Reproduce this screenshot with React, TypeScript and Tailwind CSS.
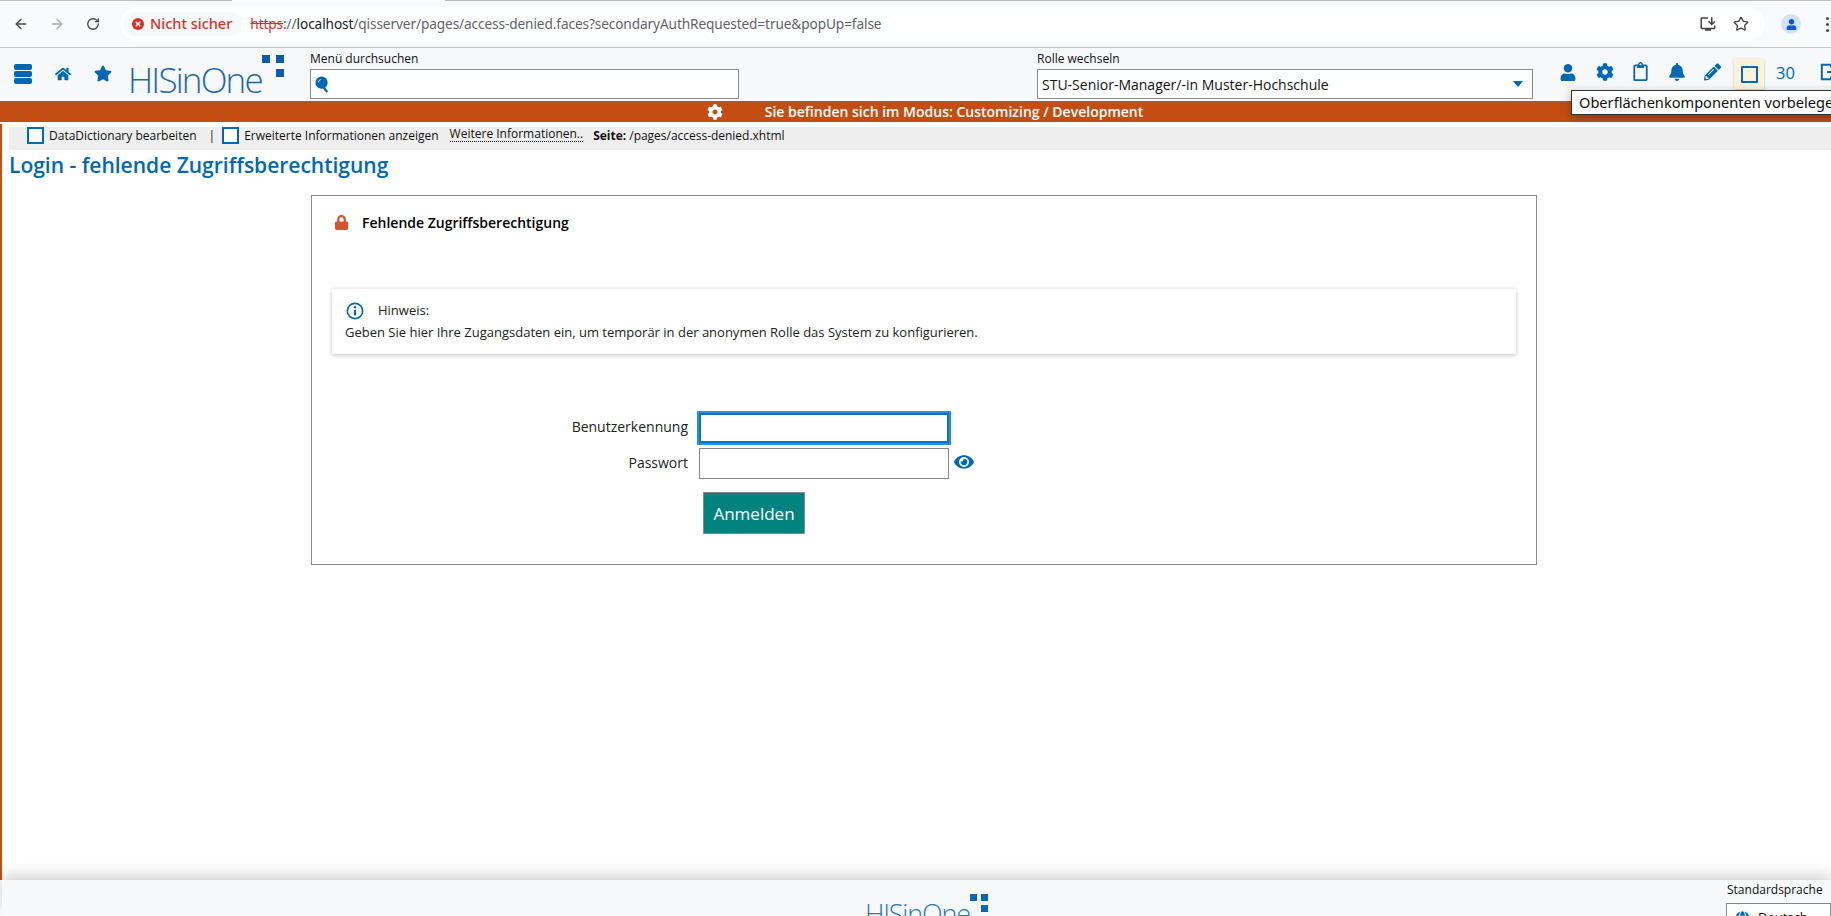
import React from "react";
import { ArrowLeft, ArrowRight, RotateCw, Star } from "lucide-react";
import { FaBell, FaCog, FaEye, FaGlobe, FaHome, FaLock, FaPencilAlt, FaRegClipboard, FaStar, FaUser } from "react-icons/fa";
import { MdOutlineInstallDesktop } from "react-icons/md";

function Logo() {
  return (
    <div className="flex items-start text-[#1f66ad]">
      <span className="font-light text-[35px] leading-[35px] tracking-[-1.8px]">HISinOne</span>
      <div className="-mt-[7px] grid grid-cols-2 gap-x-[6px] gap-y-[6px] w-[22px] shrink-0">
        <span className="w-[8px] h-[8px] bg-[#0f5cab]" />
        <span className="w-[8px] h-[8px] bg-[#0f5cab]" />
        <span className="w-[8px] h-[8px]" />
        <span className="w-[8px] h-[8px] bg-[#0f5cab]" />
      </div>
    </div>
  );
}

function FooterLogo() {
  return (
    <div className="flex items-start text-[#2a78bb]">
      <span className="font-light text-[27px] leading-[27px] tracking-[-1.2px]">HISinOne</span>
      <div className="-mt-[6px] grid grid-cols-2 gap-x-[4px] gap-y-[4px] w-[18px] shrink-0">
        <span className="w-[7px] h-[7px] bg-[#0068b4]" />
        <span className="w-[7px] h-[7px] bg-[#0068b4]" />
        <span className="w-[7px] h-[7px]" />
        <span className="w-[7px] h-[7px] bg-[#0068b4]" />
      </div>
    </div>
  );
}

function BrowserBar() {
  return (
    <div className="h-[48px] shrink-0 bg-[#f9fafb] border-b border-[#c4c4c4] flex flex-col font-['Noto_Sans',sans-serif] text-[#5f6368]">
      <div className="h-[1px] flex shrink-0">
        <span className="w-[232px] bg-[#bdbdbd]" />
        <span className="w-[213px] bg-white" />
        <span className="flex-1 bg-[#bdbdbd]" />
      </div>
      <div className="flex-1 flex items-center">
        <ArrowLeft className="w-[16px] h-[16px] ml-[13px] text-[#444]" strokeWidth={2} />
        <ArrowRight className="w-[16px] h-[16px] ml-[20px] text-[#aaa]" strokeWidth={2} />
        <RotateCw className="w-[14px] h-[14px] ml-[21px] text-[#444]" strokeWidth={2.2} />
        <div className="ml-[20px] w-[1645px] h-[34px] rounded-full bg-white flex items-center pl-[4px]">
          <div className="h-[24px] flex items-center rounded-full bg-[#f8f9fa] pl-[8px] pr-[10px] text-[#d93025] text-[14.5px] font-medium">
            <svg viewBox="0 0 16 16" className="w-[12px] h-[12px] mr-[6px]">
              <circle cx="8" cy="8" r="8" fill="#d93025" />
              <path d="M5 5l6 6M11 5l-6 6" stroke="#fff" strokeWidth="2" />
            </svg>
            Nicht sicher
          </div>
          <div className="ml-[8px] text-[13.65px] tracking-[-0.1px] whitespace-nowrap">
            <span className="text-[#d93025] line-through">https</span>
            <span>://</span>
            <span className="text-[#202124]">localhost</span>
            <span>/qisserver/pages/access-denied.faces?secondaryAuthRequested=true&amp;popUp=false</span>
          </div>
          <MdOutlineInstallDesktop className="w-[18px] h-[18px] ml-auto mr-[16px] text-[#444]" />
          <Star className="w-[16px] h-[16px] mr-[16px] text-[#444]" strokeWidth={2} />
        </div>
        <div className="ml-[16px] w-[20px] h-[20px] rounded-full bg-[#d3e3fd] flex items-center justify-center">
          <FaUser className="w-[11px] h-[11px] text-[#0b57d0]" />
        </div>
        <div className="ml-[25px] flex flex-col gap-[3px]">
          <span className="w-[3px] h-[3px] rounded-full bg-[#444]" />
          <span className="w-[3px] h-[3px] rounded-full bg-[#444]" />
          <span className="w-[3px] h-[3px] rounded-full bg-[#444]" />
        </div>
      </div>
    </div>
  );
}

function AppHeader() {
  return (
    <div className="h-[53px] shrink-0 bg-[#f7f8fa] flex relative text-[#111]">
      <div className="w-[310px] shrink-0 flex items-start">
        <div className="ml-[14px] mt-[16px] flex flex-col gap-[1px]">
          <span className="w-[18px] h-[6px] rounded-[2px] bg-[#0068b4]" />
          <span className="w-[18px] h-[6px] rounded-[2px] bg-[#0068b4]" />
          <span className="w-[18px] h-[6px] rounded-[2px] bg-[#0068b4]" />
        </div>
        <FaHome className="ml-[23px] mt-[18px] w-[16px] h-[16px] text-[#0068b4]" />
        <FaStar className="ml-[23px] mt-[17px] w-[18px] h-[17px] text-[#0068b4]" />
        <div className="ml-[16px] mt-[14px]">
          <Logo />
        </div>
      </div>
      <div className="w-[429px] shrink-0 flex flex-col">
        <label className="text-[12px] leading-[16px] mt-[3px]">Menü durchsuchen</label>
        <div className="mt-[2px] h-[30px] border border-[#8a8a8a] bg-white flex items-center pl-[4px]">
          <svg viewBox="0 0 16 18" className="w-[15px] h-[17px]">
            <circle cx="7" cy="7" r="6.5" fill="#0068b4" />
            <path d="M9 12l4 5" stroke="#0068b4" strokeWidth="2.4" />
            <path d="M3.5 7a3.5 3.5 0 0 1 3-3.4" stroke="#cfe3f3" strokeWidth="1" fill="none" />
          </svg>
        </div>
      </div>
      <div className="ml-[298px] w-[496px] shrink-0 flex flex-col">
        <label className="text-[12px] leading-[16px] mt-[3px]">Rolle wechseln</label>
        <div className="mt-[2px] h-[30px] border border-[#8a8a8a] bg-white flex items-center pl-[4px] pr-[9px] text-[14px]">
          <span>STU-Senior-Manager/-in Muster-Hochschule</span>
          <svg viewBox="0 0 10 6" className="ml-auto w-[10px] h-[6px]">
            <path d="M0 0h10L5 6z" fill="#0068b4" />
          </svg>
        </div>
      </div>
      <div className="flex items-start text-[#0068b4] ml-[26px]">
        <FaUser className="mt-[16px] w-[18px] h-[17px] shrink-0" />
        <FaCog className="ml-[19px] mt-[15px] w-[18px] h-[18px] shrink-0" />
        <FaRegClipboard className="ml-[19px] mt-[14px] w-[15px] h-[19px] shrink-0" />
        <FaBell className="ml-[21px] mt-[15px] w-[16px] h-[18px] shrink-0" />
        <FaPencilAlt className="ml-[19px] mt-[15px] w-[17px] h-[18px] shrink-0" />
        <div className="ml-[13px] mt-[11px] w-[30px] h-[30px] bg-[#fdf2d8] shadow-[0_1px_3px_rgba(0,0,0,0.2)] flex items-center justify-center shrink-0">
          <span className="w-[17px] h-[17px] border-2 border-[#0068b4] rounded-[1px]" />
        </div>
        <span className="ml-[12px] mt-[14px] text-[16.5px] leading-[22px] font-medium">30</span>
        <svg viewBox="0 0 20 20" className="ml-[25px] mt-[15px] w-[18px] h-[18px] shrink-0" fill="none" stroke="#0068b4" strokeWidth="2.2">
          <path d="M12 5V2H2v16h10v-3M8 10h10M14 6l4 4-4 4" />
        </svg>
      </div>
      <div className="absolute left-[1571px] top-[42px] w-[280px] h-[25px] bg-white border border-[#333] shadow-[0_3px_10px_rgba(0,0,0,0.3)] font-['Noto_Sans',sans-serif] text-[14.6px] leading-[23px] pl-[7px] whitespace-nowrap">
        Oberflächenkomponenten vorbelegen
      </div>
    </div>
  );
}

function ModeBar() {
  return (
    <div className="h-[21px] shrink-0 bg-[#c44e12] flex items-center justify-center text-white text-[14px] font-semibold">
      <FaCog className="w-[16px] h-[16px] ml-[19px] mr-[42px]" />
      <span>Sie befinden sich im Modus: Customizing / Development</span>
    </div>
  );
}

function ToolBar() {
  return (
    <div className="mt-[3px] ml-[7px] h-[23px] bg-[#eeeeee] flex items-start text-[12px] leading-[18px] text-[#111] whitespace-nowrap">
      <span className="ml-[18px] w-[17px] h-[17px] border-2 border-[#0068b4] bg-white" />
      <span className="ml-[5px]">DataDictionary bearbeiten</span>
      <span className="ml-[12px]">|</span>
      <span className="ml-[7px] w-[17px] h-[17px] border-2 border-[#0068b4] bg-white" />
      <span className="ml-[5px]">Erweiterte Informationen anzeigen</span>
      <span className="ml-[11px] border-b border-dotted border-[#111] leading-[14px]">Weitere Informationen..</span>
      <span className="ml-[10px] font-bold">Seite:</span>
      <span className="ml-[3px] tracking-[-0.02px]">/pages/access-denied.xhtml</span>
    </div>
  );
}

function LoginCard() {
  return (
    <div className="ml-[309px] mt-[16px] w-[1226px] h-[370px] border border-[#8a8a8a] bg-white flex flex-col">
      <div className="flex items-center ml-[22px] mt-[16px] h-[20px]">
        <FaLock className="w-[15px] h-[15px] mt-[1px] text-[#d9532a]" />
        <span className="ml-[13px] text-[14px] font-semibold text-black">Fehlende Zugriffsberechtigung</span>
      </div>
      <div className="ml-[20px] mt-[57px] w-[1184px] h-[65px] bg-white shadow-[0_1px_4px_rgba(0,0,0,0.25)] rounded-[2px] text-[13px] text-[#222] pl-[13px]">
        <div className="flex items-center mt-[12px] h-[20px]">
          <svg viewBox="0 0 20 20" className="ml-[1px] w-[18px] h-[18px]" fill="none" stroke="#0068b4">
            <circle cx="10" cy="10" r="8.5" strokeWidth="1.8" />
            <path d="M10 8.5V15" strokeWidth="2.2" />
            <circle cx="10" cy="5.7" r="1.3" fill="#0068b4" stroke="none" />
          </svg>
          <span className="ml-[14px]">Hinweis:</span>
        </div>
        <p className="mt-[2px] leading-[18px]">Geben Sie hier Ihre Zugangsdaten ein, um temporär in der anonymen Rolle das System zu konfigurieren.</p>
      </div>
      <div className="ml-[20px] mt-[59px] flex flex-col text-[14px] text-[#222]">
        <div className="flex items-center h-[30px]">
          <label className="w-[356px] text-right pb-[3px]">Benutzerkennung</label>
          <input className="ml-[11px] w-[250px] h-[30px] bg-white border-2 border-[#0b74c9] outline-2 outline-[#2b90dc] outline-offset-0" />
        </div>
        <div className="flex items-center h-[31px] mt-[5px]">
          <label className="w-[356px] text-right pb-[3px]">Passwort</label>
          <input className="ml-[11px] w-[250px] h-[31px] bg-white border border-[#8a8a8a]" />
          <FaEye className="ml-[5px] mb-[3px] w-[20px] h-[20px] text-[#0068b4]" />
        </div>
        <button className="ml-[371px] mt-[13px] w-[102px] h-[42px] pt-[1px] bg-[#00827e] border border-[#8a8a8a] text-white text-[17px]">Anmelden</button>
      </div>
    </div>
  );
}

function Footer() {
  return (
    <div className="h-[36px] ml-[2px] shrink-0 bg-[#f7f8fa] shadow-[0_-4px_16px_rgba(0,0,0,0.2)] flex overflow-hidden">
      <div className="ml-[863px] mt-[20px]">
        <FooterLogo />
      </div>
      <div className="ml-auto w-[105px] shrink-0 text-[12px] text-[#111]">
        <div className="leading-[16px] mt-[2px] pl-[1px]">Standardsprache</div>
        <div className="mt-[5px] h-[30px] border border-[#8a8a8a] bg-white flex items-center pl-[8px] text-[13px]">
          <FaGlobe className="w-[15px] h-[15px] text-[#0068b4]" />
          <span className="ml-[8px]">Deutsch</span>
        </div>
      </div>
    </div>
  );
}

export default function App() {
  return (
    <div className="w-[1831px] h-[916px] overflow-hidden flex flex-col bg-white font-['Open_Sans',sans-serif]">
      <BrowserBar />
      <AppHeader />
      <ModeBar />
      <div className="flex-1 min-h-0 flex flex-col">
        <div className="flex-1 min-h-0 mt-[2px] border-l-2 border-[#c44e12]">
          <ToolBar />
          <h1 className="ml-[7px] mt-[1px] text-[21px] leading-[28px] font-semibold text-[#0068b4]">Login - fehlende Zugriffsberechtigung</h1>
          <LoginCard />
        </div>
        <Footer />
      </div>
    </div>
  );
}
